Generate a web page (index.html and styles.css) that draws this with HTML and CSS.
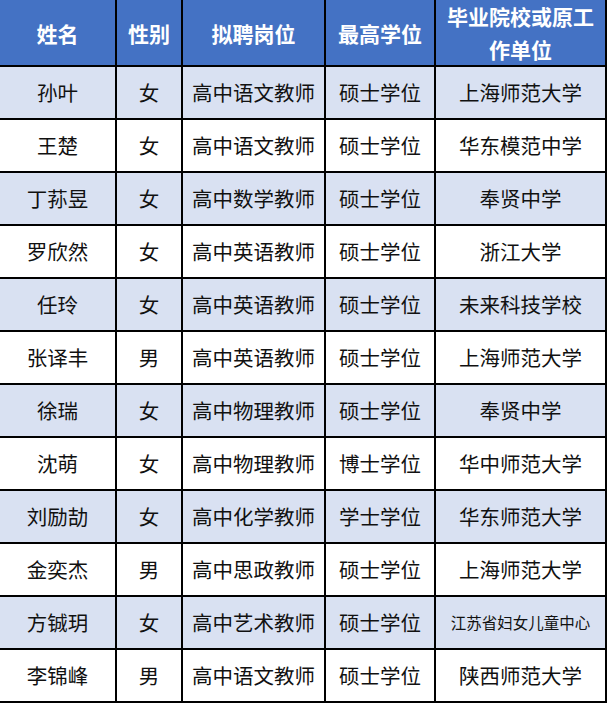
FILE: index.html
```html
<!DOCTYPE html>
<html lang="zh-CN">
<head>
<meta charset="utf-8">
<title>拟聘人员名单</title>
<link rel="stylesheet" href="styles.css">
</head>
<body>
<div class="table" role="table">
  <div class="cell head">姓名</div>
  <div class="cell head">性别</div>
  <div class="cell head">拟聘岗位</div>
  <div class="cell head">最高学位</div>
  <div class="cell head wrap">毕业院校或原工作单位</div>

  <div class="cell alt">孙叶</div><div class="cell alt">女</div><div class="cell alt">高中语文教师</div><div class="cell alt">硕士学位</div><div class="cell alt">上海师范大学</div>
  <div class="cell">王楚</div><div class="cell">女</div><div class="cell">高中语文教师</div><div class="cell">硕士学位</div><div class="cell">华东模范中学</div>
  <div class="cell alt">丁荪昱</div><div class="cell alt">女</div><div class="cell alt">高中数学教师</div><div class="cell alt">硕士学位</div><div class="cell alt">奉贤中学</div>
  <div class="cell">罗欣然</div><div class="cell">女</div><div class="cell">高中英语教师</div><div class="cell">硕士学位</div><div class="cell">浙江大学</div>
  <div class="cell alt">任玲</div><div class="cell alt">女</div><div class="cell alt">高中英语教师</div><div class="cell alt">硕士学位</div><div class="cell alt">未来科技学校</div>
  <div class="cell">张译丰</div><div class="cell">男</div><div class="cell">高中英语教师</div><div class="cell">硕士学位</div><div class="cell">上海师范大学</div>
  <div class="cell alt">徐瑞</div><div class="cell alt">女</div><div class="cell alt">高中物理教师</div><div class="cell alt">硕士学位</div><div class="cell alt">奉贤中学</div>
  <div class="cell">沈萌</div><div class="cell">女</div><div class="cell">高中物理教师</div><div class="cell">博士学位</div><div class="cell">华中师范大学</div>
  <div class="cell alt">刘励劼</div><div class="cell alt">女</div><div class="cell alt">高中化学教师</div><div class="cell alt">学士学位</div><div class="cell alt">华东师范大学</div>
  <div class="cell">金奕杰</div><div class="cell">男</div><div class="cell">高中思政教师</div><div class="cell">硕士学位</div><div class="cell">上海师范大学</div>
  <div class="cell alt">方铖玥</div><div class="cell alt">女</div><div class="cell alt">高中艺术教师</div><div class="cell alt">硕士学位</div><div class="cell alt small">江苏省妇女儿童中心</div>
  <div class="cell">李锦峰</div><div class="cell">男</div><div class="cell">高中语文教师</div><div class="cell">硕士学位</div><div class="cell">陕西师范大学</div>
</div>
</body>
</html>
```

FILE: styles.css
```css
html, body {
  margin: 0;
  padding: 0;
  background: #ffffff;
}

.table {
  display: grid;
  grid-template-columns: 115px 64px 141px 108px 169px;
  grid-template-rows: 65px repeat(12, 51px);
  gap: 2px;
  padding: 0 2px 2px 0;
  background: #000000;
  width: 607px;
  box-sizing: border-box;
  font-family: "Noto Sans CJK SC", "Noto Sans", sans-serif;
}

.cell {
  display: flex;
  align-items: center;
  justify-content: center;
  text-align: center;
  background: #ffffff;
  color: #111111;
  font-size: 20.5px;
  line-height: 1;
}

.cell.alt {
  background: #d9e1f2;
}

.cell.head {
  background: #4472c4;
  color: #ffffff;
  font-weight: bold;
  font-size: 21px;
  padding-top: 2px;
}

.cell.head.wrap {
  line-height: 33px;
  padding: 0 8px;
}

.cell.small {
  font-size: 15.5px;
}
```
